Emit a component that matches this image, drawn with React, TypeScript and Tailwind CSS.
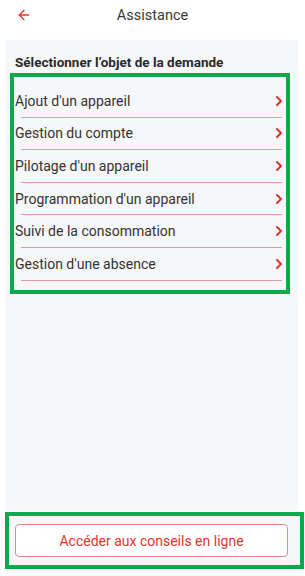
import React from 'react';
import { ArrowLeft, ChevronRight } from 'lucide-react';

const items = [
  "Ajout d'un appareil",
  'Gestion du compte',
  "Pilotage d'un appareil",
  "Programmation d'un appareil",
  'Suivi de la consommation',
  "Gestion d'une absence",
];

export default function App() {
  return (
    <div className="w-[305px] h-[576px] bg-white flex flex-col overflow-hidden font-['Roboto',sans-serif]">
      {/* Header */}
      <div className="h-[40px] shrink-0 flex items-start pt-[8px] relative">
        <ArrowLeft className="absolute left-[16px] top-[7px] text-[#e2352d]" size={16} strokeWidth={2} />
        <div className="w-full text-center text-[14.5px] text-[#3a3a3a] leading-[15px]">Assistance</div>
      </div>

      {/* Panel */}
      <div className="mx-[5px] w-[293px] h-[471px] bg-[#f6f7f9] flex flex-col">
        <div className="pl-[10px] pt-[14px] text-[13.5px] font-bold text-[#2a2a2a] leading-[16px]">
          Sélectionner l’objet de la demande
        </div>
        <div className="ml-[5px] mt-[3px] w-[280px] border-4 border-[#0aab4b] pt-[8px] pb-[9.5px]">
          {items.map((label) => (
            <div key={label} className="h-[32.6px] flex flex-col">
              <div className="flex-1 flex items-center pl-[1px]">
                <span className="flex-1 text-[14px] text-[#333333] leading-none">{label}</span>
                <ChevronRight className="text-[#d9342b] -mr-[1px]" size={16} strokeWidth={3} />
              </div>
              <div className="h-px ml-[7px] mr-[4px] bg-[#e09c9c]" />
            </div>
          ))}
        </div>
      </div>

      {/* Bottom bar */}
      <div className="mt-[1px] ml-[5px] w-[299px] h-[57px] border-4 border-[#0aab4b] bg-[#f6f7f9] flex items-center pl-[6px] pr-[12px]">
        <button className="w-full h-[33px] rounded-[4px] border border-[#e58a8a] bg-white text-[#e2352d] text-[14px] leading-none">
          Accéder aux conseils en ligne
        </button>
      </div>
    </div>
  );
}
